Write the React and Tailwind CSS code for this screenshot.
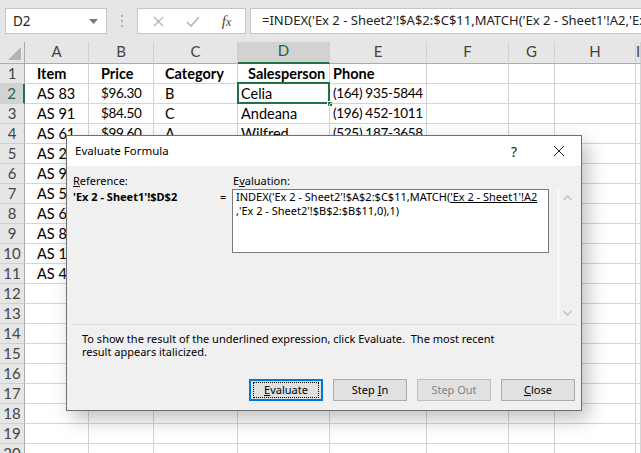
import React from 'react';

const LETTERS = ['A', 'B', 'C', 'D', 'E', 'F', 'G', 'H', 'I'];

// indent in px per column (A..I)
const PAD = ['pl-[12px]', 'pl-[12px]', 'pl-[11px]', 'pl-[3px]', 'pl-[3px]', 'pl-[3px]', 'pl-[3px]', 'pl-[3px]', 'pl-[3px]'];

const rows = [
  ['Item', 'Price', 'Category', '  Salesperson', 'Phone'],
  ['AS 83', '$96.30', 'B', 'Celia', '(164) 935-5844'],
  ['AS 91', '$84.50', 'C', 'Andeana', '(196) 452-1011'],
  ['AS 61', '$99.60', 'A', 'Wilfred', '(525) 187-3658'],
  ['AS 23'],
  ['AS 93'],
  ['AS 55'],
  ['AS 65'],
  ['AS 80'],
  ['AS 11'],
  ['AS 47'],
];

const cellFont = { fontFamily: 'Lato, "Liberation Sans", sans-serif' };
const uiFont = { fontFamily: '"Noto Sans", "Open Sans", sans-serif' };

function Grid() {
  const lines = Array.from({ length: 20 }, (_, i) => i + 1);
  return (
    <div
      className="grid grid-cols-[25px_64px_65px_84px_92px_97px_82px_46px_81px_1fr] text-[14.5px] text-black"
      style={cellFont}
    >
      {/* header row */}
      <div className="relative h-[22px] bg-[#e6e6e6] border-r border-b border-[#ababab]">
        <div className="absolute right-[3px] bottom-[3px] w-0 h-0 border-l-[13px] border-l-transparent border-b-[13px] border-b-[#b4b4b4]" />
      </div>
      {LETTERS.map((l) => (
        <div
          key={l}
          className={`h-[22px] flex items-end justify-center pb-[1px] border-r border-[#d0d0d0] text-[15px] ${
            l === 'D'
              ? 'bg-[#d2d2d2] text-[#21643d] border-b-2 border-b-[#217346]'
              : 'bg-[#e6e6e6] text-[#444] border-b border-b-[#ababab]'
          }`}
        >
          {l}
        </div>
      ))}

      {lines.map((r) => (
        <React.Fragment key={r}>
          <div
            className={`h-[20px] flex items-center justify-center border-b border-[#d0d0d0] text-[15px] ${
              r === 2
                ? 'bg-[#d2d2d2] text-[#21643d] border-r-2 border-r-[#217346]'
                : 'bg-[#e6e6e6] text-[#444] border-r border-r-[#ababab]'
            }`}
          >
            {r}
          </div>
          {LETTERS.map((l, ci) => {
            const val = (rows[r - 1] && rows[r - 1][ci]) || '';
            const sel = r === 2 && l === 'D';
            const num = val.startsWith('$') || val.startsWith('(');
            return (
              <div
                key={l}
                className={`relative h-[20px] flex items-center whitespace-pre border-r border-b border-[#d4d4d4] ${PAD[ci]} ${
                  r === 1 ? 'font-bold' : ''
                } ${num ? 'text-[13.5px] tracking-[-0.3px]' : ''}`}
              >
                {sel && (
                  <>
                    <div className="absolute left-[-1px] top-[-2px] right-[-1px] bottom-[-1px] border-2 border-[#217346]" />
                    <div className="absolute right-[-4px] bottom-[-4px] w-[6px] h-[6px] bg-[#217346] border border-white" />
                  </>
                )}
                <span className="relative">{val}</span>
              </div>
            );
          })}
        </React.Fragment>
      ))}
    </div>
  );
}

function Btn({ children, primary, disabled }) {
  return (
    <div
      className={`w-[74px] h-[22px] flex items-center justify-center ${
        primary
          ? 'border-2 border-[#0078d7] bg-[#e1e1e1]'
          : disabled
          ? 'border border-[#bfbfbf] bg-[#e1e1e1] text-[#838383]'
          : 'border border-[#adadad] bg-[#e1e1e1]'
      }`}
    >
      {primary ? (
        <div className="w-[66px] h-[16px] border border-dotted border-black flex items-center justify-center">
          {children}
        </div>
      ) : (
        children
      )}
    </div>
  );
}

function Dialog() {
  return (
    <div
      className="absolute left-[66px] top-[135px] w-[516px] h-[276px] bg-[#f0f0f0] border border-[#6f6f6f] shadow-[6px_8px_18px_rgba(0,0,0,0.25)] text-[11px] text-black flex flex-col"
      style={uiFont}
    >
      {/* title bar */}
      <div className="h-[30px] shrink-0 bg-white flex items-center pl-[8px]">
        <span className="flex-1 text-[11.5px]">Evaluate Formula</span>
        <span className="w-[24px] text-center text-[14px] text-[#222]">?</span>
        <div className="w-[10px]" />
        <div className="w-[45px] flex justify-center">
          <svg width="12" height="12" viewBox="0 0 12 12">
            <path d="M1 1 L11 11 M11 1 L1 11" stroke="#222" strokeWidth="1" />
          </svg>
        </div>
      </div>

      {/* reference / evaluation */}
      <div className="h-[158px] shrink-0 flex pl-[6px] pt-[7px]">
        <div className="w-[147px] flex flex-col">
          <span className="leading-[15px]">
            <span className="underline">R</span>eference:
          </span>
          <span className="font-bold leading-[15px] mt-[1px]">'Ex 2 - Sheet1'!$D$2</span>
        </div>
        <div className="w-[12px] pt-[16px] leading-[15px]">=</div>
        <div className="flex flex-col">
          <span className="leading-[15px] pl-[1px]">
            E<span className="underline">v</span>aluation:
          </span>
          <div className="mt-[1px] w-[317px] h-[64px] bg-white border border-[#7a7a7a] px-[3px] leading-[14px] whitespace-nowrap">
            INDEX('Ex 2 - Sheet2'!$A$2:$C$11,MATCH(<span className="underline">'Ex 2 - Sheet1'!A2</span>
            <br />
            ,'Ex 2 - Sheet2'!$B$2:$B$11,0),1)
          </div>
        </div>
        <div className="ml-[9px] mt-[16px] w-[17px] h-[133px] border-l border-white flex flex-col items-center justify-between py-[6px]">
          <svg width="9" height="6" viewBox="0 0 9 6">
            <path d="M0.5 5 L4.5 1 L8.5 5" stroke="#c0c0c0" strokeWidth="1.5" fill="none" />
          </svg>
          <svg width="9" height="6" viewBox="0 0 9 6">
            <path d="M0.5 1 L4.5 5 L8.5 1" stroke="#c0c0c0" strokeWidth="1.5" fill="none" />
          </svg>
        </div>
      </div>

      <div className="mx-[6px] border-t border-[#dcdcdc]" />

      <div className="pl-[15px] pt-[7px] leading-[13px]">
        To show the result of the underlined expression, click Evaluate.&nbsp; The most recent
        <br />
        result appears italicized.
      </div>

      <div className="flex justify-end gap-[10px] pr-[6px] mt-[21px]">
        <Btn primary>
          <span>
            <span className="underline">E</span>valuate
          </span>
        </Btn>
        <Btn>
          <span>
            Step <span className="underline">I</span>n
          </span>
        </Btn>
        <Btn disabled>Step Out</Btn>
        <Btn>
          <span>
            <span className="underline">C</span>lose
          </span>
        </Btn>
      </div>
    </div>
  );
}

export default function App() {
  return (
    <div className="relative w-[641px] h-[453px] overflow-hidden bg-white">
      {/* formula bar */}
      <div className="h-[42px] bg-[#e6e6e6] flex items-start pt-[8px]" style={uiFont}>
        <div className="ml-[5px] w-[102px] h-[26px] bg-white border border-[#c6c6c6] flex items-center justify-between pl-[7px] pr-[8px] text-[13.5px] text-[#222]">
          <span>D2</span>
          <svg width="9" height="5" viewBox="0 0 9 5">
            <path d="M0 0 L9 0 L4.5 5 Z" fill="#7a7a7a" />
          </svg>
        </div>
        <div className="w-[30px] h-[26px] flex flex-col items-center justify-center gap-[3px]">
          <div className="w-[2px] h-[2px] bg-[#b0b0b0]" />
          <div className="w-[2px] h-[2px] bg-[#b0b0b0]" />
          <div className="w-[2px] h-[2px] bg-[#b0b0b0]" />
        </div>
        <div className="w-[109px] h-[26px] bg-white border border-[#c6c6c6] flex items-center">
          <div className="w-[40px] flex justify-center">
            <svg width="11" height="11" viewBox="0 0 11 11">
              <path d="M1 1 L10 10 M10 1 L1 10" stroke="#b3b3b3" strokeWidth="1.3" />
            </svg>
          </div>
          <div className="w-[30px] flex justify-center">
            <svg width="14" height="11" viewBox="0 0 14 11">
              <path d="M1 6 L5 10 L13 1" stroke="#b3b3b3" strokeWidth="1.6" fill="none" />
            </svg>
          </div>
          <div className="flex-1 flex justify-center">
            <span className="italic text-[15px] text-[#444]" style={{ fontFamily: '"Liberation Serif", serif' }}>
              f<span className="text-[12px]">x</span>
            </span>
          </div>
        </div>
        <div className="ml-[4px] flex-1 h-[26px] bg-white border border-[#c6c6c6] border-r-0 flex items-center pl-[11px] text-[13px] text-[#222] whitespace-nowrap overflow-hidden">
          =INDEX('Ex 2 - Sheet2'!$A$2:$C$11,MATCH('Ex 2 - Sheet1'!A2,'Ex 2 - Sheet2'!$B$2:$B$11,0),1)
        </div>
      </div>

      <Grid />
      <Dialog />
    </div>
  );
}
